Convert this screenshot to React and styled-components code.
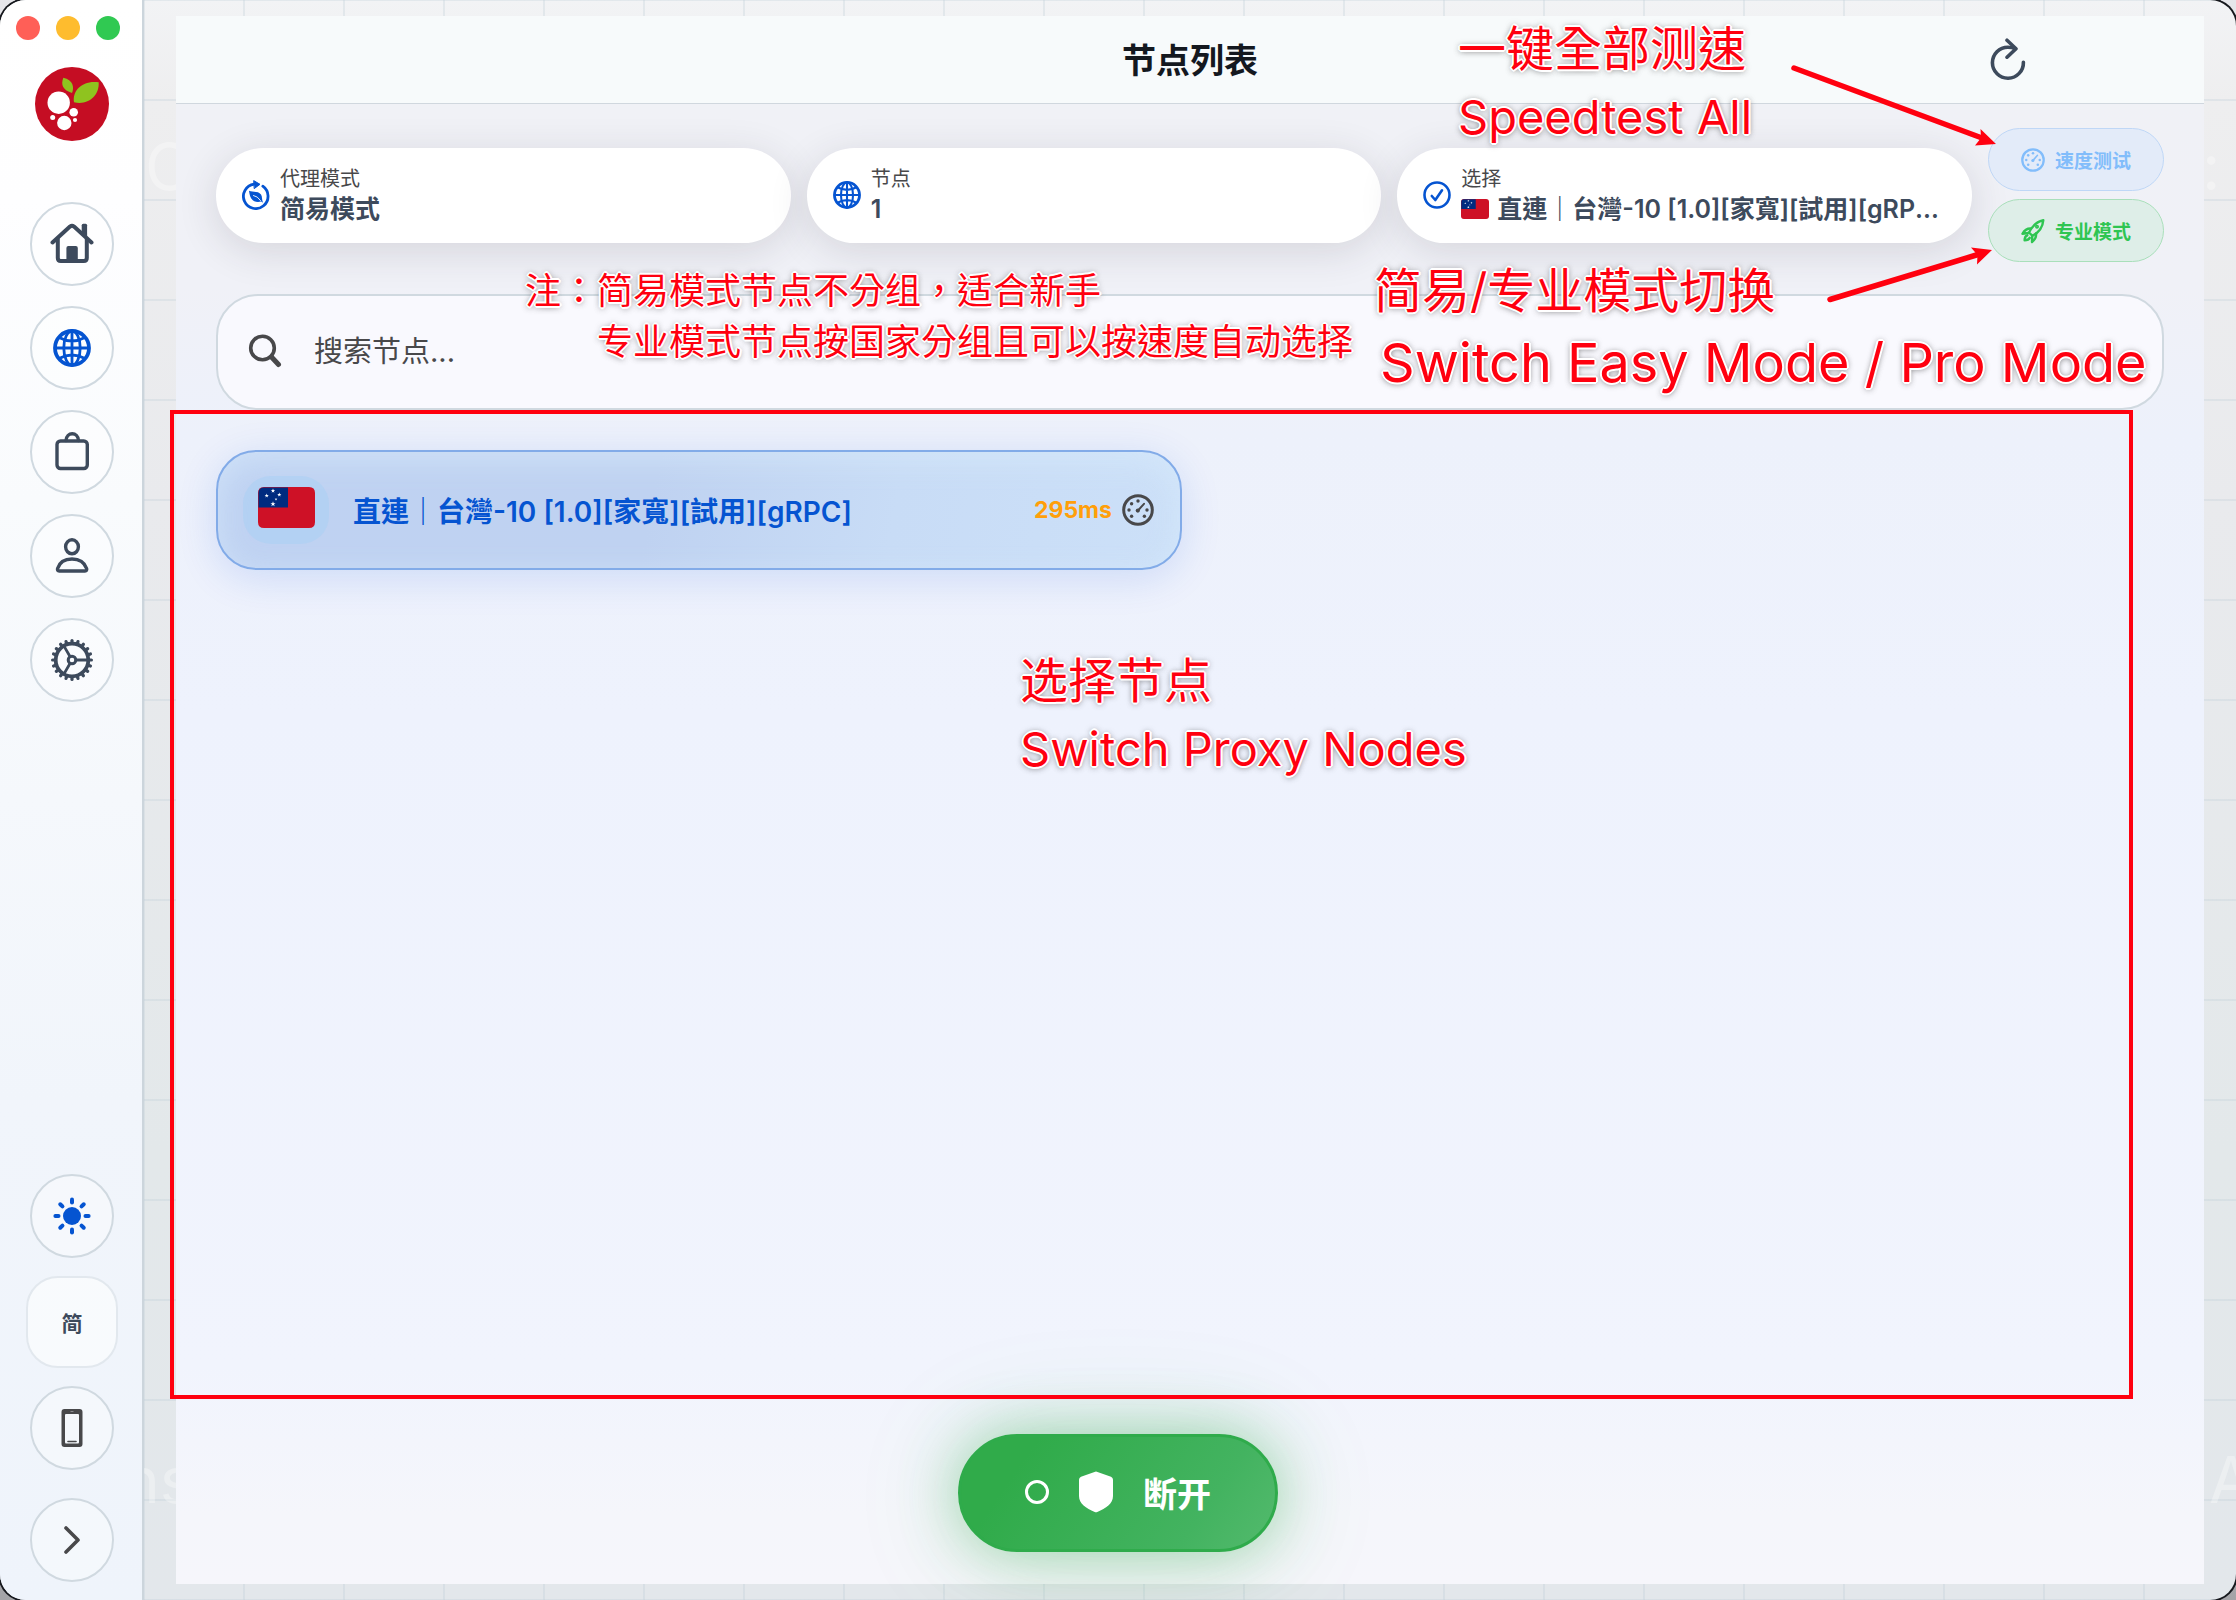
import React, { useState } from 'react';
import styled, { createGlobalStyle, css } from 'styled-components';

const sans = `Inter, "Noto Sans CJK SC", sans-serif`;
const sansTC = `Inter, "Noto Sans CJK TC", sans-serif`;
const ink = '#3d4a5c';
const grey = '#48484a';
const blue = '#0554d1';
const line = '#d0d9e0';

const GlobalStyle = createGlobalStyle`
  * { box-sizing: border-box; }
  html { background: linear-gradient(#e6e6ea, #a4a4a8); min-height: 100%; }
  body { margin: 0; font-family: ${sans}; color: ${ink}; }
  button, input { font: inherit; color: inherit; }
  button { cursor: pointer; padding: 0; background: none; border: 0; }
  svg { display: block; flex: none; }
`;

const Window = styled.div`
  position: relative;
  display: flex;
  min-height: 100vh;
  border-radius: 26px;
  overflow: hidden;
  background-color: #eaecee;
  background-image:
    linear-gradient(rgba(190, 205, 215, 0.3) 2px, transparent 2px),
    linear-gradient(90deg, rgba(190, 205, 215, 0.3) 2px, transparent 2px),
    linear-gradient(#f2f3f5, #eeeeef 100px, #e9eaed 500px, #e3e8ea 1150px, #e3e7eb);
  background-size: 100px 100px, 100px 100px, 100% 100%;
  background-position: 0 -1px, 43px 0, 0 0;
  box-shadow: 0 0 0 2px #16181d;
`;

const Watermark = styled.span`
  position: absolute;
  left: ${(p) => p.$x};
  top: ${(p) => p.$y};
  font-size: 64px;
  line-height: 80px;
  color: rgba(255, 255, 255, 0.32);
`;

/* ---------- sidebar ---------- */

const Sidebar = styled.aside`
  position: relative;
  display: flex;
  flex-direction: column;
  align-items: center;
  width: 144px;
  flex: none;
  padding: 16px 0 18px 2px;
  border-right: 2px solid #ccd5dc;
  background: linear-gradient(#ffffff, #fefeff 200px, #f9fbfd 500px, #f1f5fb 1100px, #eff4fb);
`;

const Lights = styled.div`
  display: flex;
  gap: 16px;
  align-self: flex-start;
  padding-left: 14px;
`;

const Light = styled.button`
  width: 24px;
  height: 24px;
  border-radius: 50%;
  background: ${(p) => p.$color};
`;

const Brand = styled.div`
  margin-top: 27px;
`;

const Nav = styled.nav`
  display: flex;
  flex-direction: column;
  gap: 20px;
  margin-top: 61px;
`;

const Tools = styled.div`
  display: flex;
  flex-direction: column;
  align-items: center;
  gap: 18px;
  margin-top: auto;
`;

const round = css`
  display: flex;
  align-items: center;
  justify-content: center;
  border: 2px solid ${line};
  background: rgba(255, 255, 255, 0.35);
`;

const RoundButton = styled.button`
  ${round}
  width: 84px;
  height: 84px;
  border-radius: 42px;
  color: ${(p) => (p.$active ? blue : ink)};
`;

const LangButton = styled.button`
  ${round}
  width: 92px;
  height: 92px;
  border-radius: 32px;
  border-color: #e2e8ee;
  background: rgba(255, 255, 255, 0.55);
  font-size: 21px;
  font-weight: 700;
`;

const ExpandButton = styled(RoundButton)`
  margin-top: 10px;
  color: ${grey};
`;

/* ---------- main panel ---------- */

const Main = styled.main`
  position: relative;
  display: flex;
  flex: 1;
  min-width: 0;
  padding: 16px 32px;
  overflow: hidden;
`;

const Panel = styled.section`
  position: relative;
  display: flex;
  flex-direction: column;
  flex: 1;
  min-width: 0;
  background: linear-gradient(#f0f1f6 90px, #f0f1f7 270px, #edf1fb 420px, #eef2fd 700px, #f1f4fd 1350px, #f5f6fb 1500px, #f6f6fb);
`;

const Header = styled.header`
  display: grid;
  grid-template-columns: 1fr auto 1fr;
  align-items: center;
  height: 88px;
  border-bottom: 1px solid #d0d7de;
  background: #f7fafb;
`;

const Title = styled.h1`
  grid-column: 2;
  margin: 0;
  padding-top: 2px;
  font-size: 34px;
  line-height: 48px;
  font-weight: 700;
  color: #14181f;
`;

const RefreshButton = styled.button`
  justify-self: end;
  margin-right: 176px;
`;

const Body = styled.div`
  padding: 24px 40px;
`;

const Summary = styled.div`
  display: flex;
  align-items: center;
  gap: 16px;
`;

const Card = styled.div`
  display: flex;
  align-items: center;
  gap: 10px;
  flex: 1 1 0;
  min-width: 0;
  height: 95px;
  padding: 0 32px 0 26px;
  border-radius: 48px;
  background: #ffffff;
  color: ${blue};
  box-shadow: 0 8px 40px rgba(50, 40, 60, 0.14);
`;

const CardText = styled.div`
  min-width: 0;
`;

const Label = styled.div`
  font-size: 20px;
  line-height: 28px;
  color: ${grey};
`;

const Value = styled.div`
  display: flex;
  align-items: center;
  gap: 8px;
  font-family: ${(p) => (p.lang === 'zh-Hant' ? sansTC : sans)};
  font-size: 25px;
  line-height: 33px;
  font-weight: 600;
  color: ${ink};
`;

const Ellipsis = styled.span`
  overflow: hidden;
  white-space: nowrap;
  text-overflow: ellipsis;
`;

const Actions = styled.div`
  display: flex;
  flex-direction: column;
  gap: 8px;
  width: 176px;
  flex: none;
`;

const tones = {
  blue: { text: '#82bdfb', fill: '#e3ebf9', edge: '#bfd7f6' },
  green: { text: '#2fc552', fill: '#deeee8', edge: '#a9dfba' },
};

const Action = styled.button`
  display: flex;
  align-items: center;
  justify-content: center;
  gap: 10px;
  height: 63px;
  border: 1px solid ${(p) => tones[p.$tone].edge};
  border-radius: 32px;
  background: ${(p) => tones[p.$tone].fill};
  color: ${(p) => tones[p.$tone].text};
  font-size: 19px;
  font-weight: 700;
`;

const Search = styled.label`
  display: flex;
  align-items: center;
  gap: 32px;
  height: 116px;
  margin-top: 32px;
  padding: 0 30px 2px;
  border: 2px solid ${line};
  border-radius: 42px;
  background: #f9f9fe;
  color: ${grey};
`;

const SearchInput = styled.input`
  flex: 1;
  min-width: 0;
  height: 48px;
  padding: 0;
  border: 0;
  outline: 0;
  background: none;
  font-size: 29px;
  &::placeholder { color: ${grey}; opacity: 1; }
`;

const Nodes = styled.ul`
  display: grid;
  grid-template-columns: 1fr 1fr;
  gap: 16px;
  margin: 40px 0 0;
  padding: 0;
  list-style: none;
`;

const Node = styled.li`
  display: flex;
  align-items: center;
  gap: 10px;
  height: 120px;
  padding: 0 26px 0 25px;
  border: 2px solid #82abe8;
  border-radius: 40px;
  background: linear-gradient(100deg, #bfd2f2, #bfd2f1 45%, #c8dcf6 70%, #cce0f8);
  box-shadow: inset 0 8px 32px rgba(218, 236, 252, 0.6), 0 8px 40px rgba(0, 80, 220, 0.14);
`;

const NodePick = styled.button`
  display: flex;
  align-items: center;
  gap: 24px;
  flex: 1;
  min-width: 0;
  font-family: ${sansTC};
  font-size: 28px;
  font-weight: 600;
  color: ${blue};
`;

const FlagTile = styled.span`
  display: flex;
  align-items: center;
  justify-content: center;
  width: 86px;
  height: 68px;
  padding-bottom: 5px;
  border-radius: 28px;
  background: rgba(170, 208, 244, 0.55);
`;

const Ping = styled.span`
  font-size: 23px;
  font-weight: 700;
  color: #ff9f0a;
`;

const PingButton = styled.button`
  color: ${grey};
`;

const Disconnect = styled.button`
  position: absolute;
  left: 50%;
  bottom: 48px;
  display: flex;
  align-items: center;
  justify-content: center;
  gap: 30px;
  width: 320px;
  height: 118px;
  margin-left: -160px;
  padding-bottom: 2px;
  border: 3px solid #2fab4b;
  border-radius: 59px;
  background: linear-gradient(125deg, #30ab4a 20%, #43b360 75%, #53ba6d);
  box-shadow: 0 0 60px rgba(48, 171, 74, 0.42), 0 4px 120px rgba(48, 171, 74, 0.14);
  color: #ffffff;
  font-size: 34px;
  font-weight: 700;
`;

const Ring = styled.span`
  width: 24px;
  height: 24px;
  border: 3px solid #ffffff;
  border-radius: 50%;
`;

/* ---------- callouts drawn over the window ---------- */

const Callouts = styled.div`
  position: absolute;
  inset: 0;
  pointer-events: none;
`;

const Frame = styled.div`
  position: absolute;
  left: 170px;
  right: 103px;
  top: 410px;
  bottom: 201px;
  border: 4px solid #ff000f;
`;

const Arrows = styled.svg`
  position: absolute;
  right: 216px;
  top: 40px;
`;

const Note = styled.div`
  position: absolute;
  left: ${(p) => p.$x};
  top: ${(p) => p.$y};
  font-family: ${sansTC};
  font-size: ${(p) => p.$size || 48}px;
  line-height: ${(p) => p.$leading || 68}px;
  white-space: pre;
  color: #ff000f;
  text-shadow:
    2px 0 0 #fff, -2px 0 0 #fff, 0 2px 0 #fff, 0 -2px 0 #fff,
    1px 1px 0 #fff, -1px 1px 0 #fff, 1px -1px 0 #fff, -1px -1px 0 #fff,
    0 0 6px rgba(60, 60, 60, 0.6), 0 2px 6px rgba(60, 60, 60, 0.35);
`;

const NoteLine = styled.div`
  font-size: ${(p) => (p.$size ? `${p.$size}px` : 'inherit')};
  padding-left: ${(p) => p.$indent || 0}px;
`;

/* ---------- icons ---------- */

const Svg = ({ w, h, sw = 3, children }) => (
  <svg width={w} height={h} viewBox={`0 0 ${w} ${h}`} fill="none" stroke="currentColor" strokeWidth={sw} strokeLinecap="round" strokeLinejoin="round" aria-hidden="true">
    {children}
  </svg>
);

const HomeIcon = () => (
  <Svg w={44} h={44} sw={4}>
    <path d="M2.5 20.5 20 4.6Q22 3 24 4.6L41.5 20.5" />
    <path d="M7.8 17V36Q7.8 39 10.8 39H33.8Q36.8 39 36.8 36V17" />
    <path d="M16.4 40V26Q16.4 24 18.4 24H25.8Q27.8 24 27.8 26V40Z" fill="currentColor" stroke="none" />
    <path d="M31.7 11V3.2Q31.7 1.7 33.2 1.7H35.6Q37.1 1.7 37.1 3.2V17Z" fill="currentColor" stroke="none" />
  </Svg>
);

const GlobeIcon = ({ size = 38 }) => (
  <svg width={size} height={size} viewBox="0 0 38 38" fill="none" stroke="currentColor" strokeWidth="2.8" aria-hidden="true">
    <circle cx="19" cy="19" r="17" strokeWidth="3.8" />
    <ellipse cx="19" cy="19" rx="8.2" ry="17" />
    <path d="M19 2V36M2 19H36M6 8.5Q19 15.5 32 8.5M6 29.5Q19 22.5 32 29.5" />
  </svg>
);

const BagIcon = () => (
  <Svg w={44} h={44} sw={3.4}>
    <rect x="7" y="11" width="30.3" height="27.5" rx="3.5" />
    <path d="M16 10.5C16.500 1.500 28 1.500 28.500 10.500" />
  </Svg>
);

const PersonIcon = () => (
  <Svg w={44} h={44} sw={3.4}>
    <ellipse cx="22" cy="12.8" rx="6.4" ry="7" />
    <path d="M7.6 34.5C9.5 28.5 14.5 25 22 25S34.5 28.5 36.6 34.5Q37.2 37 35 37H9.2Q7 37 7.6 34.5Z" />
  </Svg>
);

const GearIcon = () => (
  <Svg w={44} h={44}>
    <circle cx="22" cy="22" r="16.3" strokeWidth="3.8" />
    <circle cx="22" cy="22" r="3.8" strokeWidth="3" />
    {Array.from({ length: 20 }, (_, i) => (
      <path key={i} d="M39 22H41.4" strokeWidth="3.2" transform={`rotate(${i * 18} 22 22)`} />
    ))}
    {[0, 120, 240].map((a) => (
      <path key={a} d="M26 22H38" strokeWidth="2.8" transform={`rotate(${a} 22 22)`} />
    ))}
  </Svg>
);

const SunIcon = () => (
  <Svg w={40} h={40} sw={4}>
    <circle cx="20" cy="20" r="9" fill="currentColor" stroke="none" />
    {[0, 45, 90, 135, 180, 225, 270, 315].map((a) => (
      <path key={a} d="M33.5 20H36.6" transform={`rotate(${a} 20 20)`} />
    ))}
  </Svg>
);

const PhoneIcon = () => (
  <svg width="22" height="38" viewBox="0 0 22 38" aria-hidden="true">
    <path fillRule="evenodd" fill={grey} d="M3.5 0H18.5Q21.5 0 21.5 3V35Q21.5 38 18.5 38H3.5Q.5 38 .5 35V3Q.5 0 3.5 0ZM5 5Q4 5 4 6V33Q4 34.5 5 34.5H17Q18 34.5 18 33V6Q18 5 17 5Z" />
    <path d="M7 32.5H15" stroke={grey} strokeWidth="1.6" strokeLinecap="round" />
    <path d="M9.5 2.5H12.5" stroke="#8c8c90" strokeWidth="1" />
  </svg>
);

const ChevronIcon = () => (
  <Svg w={16} h={28} sw={3.6}>
    <path d="M2 2 14 14 2 26" />
  </Svg>
);

const RefreshIcon = () => (
  <Svg w={40} h={44} sw={3.6}>
    <path d="M35.4 24.2A15.5 15.5 0 1 1 20 9.2Q24.5 9.2 27 10.7" />
    <path d="M19 2.2 28 10.7 19 19.2" />
  </Svg>
);

const EasyModeIcon = () => (
  <Svg w={28} h={30} sw={2.8}>
    <path d="M20.8 6.2A12.3 12.3 0 1 1 12 4.1" />
    <path d="M12 .8 18 4.3 12.5 8.4Z" fill="currentColor" strokeWidth="1" />
    <path d="M7 10.8C11 12.5 16.5 10.8 19 14.5C20.5 17 19.6 19 21 22.8L19.3 21.5C16 22.3 13 22 10.8 20.3C8 18 7.6 14.5 7 10.8Z" fill="currentColor" stroke="none" />
    <path d="M11.5 15.5Q15.5 16 18.5 20.5" stroke="#fff" strokeWidth=".9" />
  </Svg>
);

const CheckIcon = () => (
  <Svg w={28} h={28} sw={2.6}>
    <circle cx="14" cy="14" r="12.5" />
    <path d="M8.8 15 12.3 19 19 9.3" />
  </Svg>
);

const GaugeIcon = ({ size = 32 }) => (
  <svg width={size} height={size} viewBox="0 0 32 32" fill="currentColor" aria-hidden="true">
    <circle cx="16" cy="16" r="14.3" fill="none" stroke="currentColor" strokeWidth="3" />
    {[[16, 7], [9.6, 9.8], [7, 16], [9.6, 22.3], [22.4, 22.3], [25, 16]].map(([x, y]) => (
      <circle key={`${x}-${y}`} cx={x} cy={y} r="1.7" />
    ))}
    <circle cx="15.8" cy="16.6" r="2.1" />
    <path d="M16 16.5 22 9.8" stroke="currentColor" strokeWidth="2" strokeLinecap="round" />
  </svg>
);

const RocketIcon = () => (
  <Svg w={24} h={26} sw={2.4}>
    <path d="M22.3 2.2C16 3.5 11.5 7.5 8 14.5L11.5 17.8C18 14.5 21.8 9 22.3 2.2Z" />
    <path d="M10 10.5C6 10.3 3.5 12 1.5 15.8L7.5 15" />
    <path d="M15 15.5C15.5 19 14 21.8 11 24L11.2 18.5" />
    <path d="M6.3 17.3C4.2 18 3.6 20 3.6 22.3C6 22.3 8 21.6 8.8 19.8" />
    <circle cx="16" cy="8.8" r=".8" />
  </Svg>
);

const SearchIcon = () => (
  <Svg w={34} h={34} sw={3.6}>
    <circle cx="14.5" cy="14" r="11.8" />
    <path d="M23.5 23 30.5 30.5" strokeWidth="5" />
  </Svg>
);

const ShieldIcon = () => (
  <svg width="34" height="42" viewBox="0 0 34 42" fill="currentColor" aria-hidden="true">
    <path d="M15.5 1Q17 .2 18.5 1L32 5.8Q34 6.6 34 8.8V25C34 33 27 37 18.3 41Q17 41.6 15.7 41C7 37 0 33 0 25V8.8Q0 6.6 2 5.8Z" />
  </svg>
);

const LogoIcon = () => (
  <svg width="74" height="74" viewBox="-37 -37 74 74" role="img" aria-label="logo">
    <circle r="37" fill="#c50d23" />
    <g fill="#fff">
      <circle cx="-13.3" cy="-1.3" r="11.2" />
      <circle cx="-7.7" cy="19" r="7.2" />
      <circle cx="1.7" cy="8.3" r="4.3" />
      <circle cx="-19.3" cy="13.5" r="2.5" />
      <circle cx="3" cy="16" r="2.1" />
    </g>
    <g fill="#8fc31f">
      <path d="M-8.7-26.3C1-24 2.5-17 0-11C-9-14-11.5-19-8.7-26.3Z" />
      <path d="M26.7-21.7C10-24 0-13 2-1.7C16 1.5 27.5-8 26.7-21.7Z" />
    </g>
  </svg>
);

const star = 'M0-1 .24-.32.95-.31.38.12.59.81 0 .4-.59.81-.38.12-.95-.31-.24-.32Z';

const Flag = ({ w, h }) => (
  <svg width={w} height={h} viewBox="0 0 57 41" preserveAspectRatio="none" aria-hidden="true">
    <path d="M6 0H51Q57 0 57 6V35Q57 41 51 41H6Q0 41 0 35V6Q0 0 6 0Z" fill="#ce1126" />
    <path d="M6 .5H30V20.5H.5V6Q.5.5 6 .5Z" fill="#002b7f" />
    {[[15, 3.8, 2.3], [8.7, 8.7, 2.2], [21.3, 7.7, 2.2], [18, 12.3, 1.4], [15, 17, 2.7]].map(([x, y, r]) => (
      <path key={`${x}${y}`} d={star} fill="#fff" transform={`translate(${x} ${y}) scale(${r})`} />
    ))}
  </svg>
);

const nodeName = '直連｜台灣-10 [1.0][家寬][試用][gRPC]';

export default function App() {
  const [query, setQuery] = useState('');

  return (
    <>
      <GlobalStyle />
      <Window>
        <Sidebar>
          <Lights>
            <Light $color="#ff5f57" aria-label="关闭" />
            <Light $color="#febc2e" aria-label="最小化" />
            <Light $color="#30c952" aria-label="缩放" />
          </Lights>
          <Brand><LogoIcon /></Brand>
          <Nav>
            <RoundButton aria-label="首页"><HomeIcon /></RoundButton>
            <RoundButton aria-label="节点" $active><GlobeIcon /></RoundButton>
            <RoundButton aria-label="商店"><BagIcon /></RoundButton>
            <RoundButton aria-label="用户"><PersonIcon /></RoundButton>
            <RoundButton aria-label="设置"><GearIcon /></RoundButton>
          </Nav>
          <Tools>
            <RoundButton aria-label="主题" $active><SunIcon /></RoundButton>
            <LangButton>简</LangButton>
            <RoundButton aria-label="手机"><PhoneIcon /></RoundButton>
            <ExpandButton aria-label="展开"><ChevronIcon /></ExpandButton>
          </Tools>
        </Sidebar>

        <Main>
          <Watermark aria-hidden="true" $x="1px" $y="127px">C</Watermark>
          <Watermark aria-hidden="true" $x="-22px" $y="1440px">ns</Watermark>
          <Watermark aria-hidden="true" $x="calc(100% - 34px)" $y="127px">:</Watermark>
          <Watermark aria-hidden="true" $x="calc(100% - 27px)" $y="1440px">A</Watermark>
          <Panel>
            <Header>
              <Title>节点列表</Title>
              <RefreshButton aria-label="刷新"><RefreshIcon /></RefreshButton>
            </Header>
            <Body>
              <Summary>
                <Card>
                  <EasyModeIcon />
                  <CardText>
                    <Label>代理模式</Label>
                    <Value>简易模式</Value>
                  </CardText>
                </Card>
                <Card>
                  <GlobeIcon size={28} />
                  <CardText>
                    <Label>节点</Label>
                    <Value>1</Value>
                  </CardText>
                </Card>
                <Card>
                  <CheckIcon />
                  <CardText>
                    <Label>选择</Label>
                    <Value lang="zh-Hant">
                      <Flag w={28} h={20} />
                      <Ellipsis>{nodeName}</Ellipsis>
                    </Value>
                  </CardText>
                </Card>
                <Actions>
                  <Action $tone="blue"><GaugeIcon size={24} />速度测试</Action>
                  <Action $tone="green"><RocketIcon />专业模式</Action>
                </Actions>
              </Summary>

              <Search>
                <SearchIcon />
                <SearchInput aria-label="搜索节点" placeholder="搜索节点..." value={query} onChange={(e) => setQuery(e.target.value)} />
              </Search>

              <Nodes>
                <Node>
                  <NodePick lang="zh-Hant">
                    <FlagTile><Flag w={57} h={41} /></FlagTile>
                    {nodeName}
                  </NodePick>
                  <Ping>295ms</Ping>
                  <PingButton aria-label="测速"><GaugeIcon /></PingButton>
                </Node>
              </Nodes>
            </Body>
          </Panel>
        </Main>

        <Disconnect>
          <Ring />
          <ShieldIcon />
          断开
        </Disconnect>

        <Callouts>
          <Frame />
          <Arrows width="260" height="270" viewBox="1760 40 260 270" fill="#ff000f" stroke="#ff000f">
            <path d="M1794 68 1982 138" strokeWidth="5.5" strokeLinecap="round" />
            <path d="M1996 144 1980.5 129 1981 138 1975 145.5Z" stroke="none" />
            <path d="M1830 299.5 1978 254.5" strokeWidth="5.5" strokeLinecap="round" />
            <path d="M1992 250 1971 247.5 1977.5 255 1977 264.5Z" stroke="none" />
          </Arrows>
          <Note $x="calc(100% - 778px)" $y="15px">
            <NoteLine>一键全部测速</NoteLine>
            <NoteLine $size={47}>Speedtest All</NoteLine>
          </Note>
          <Note $x="calc(100% - 862px)" $y="255px" $leading={72}>
            <NoteLine>简易/专业模式切换</NoteLine>
            <NoteLine $size={54} $indent={6}>Switch Easy Mode / Pro Mode</NoteLine>
          </Note>
          <Note $x="525px" $y="266px" $size={36} $leading={51}>
            <NoteLine>注：简易模式节点不分组，适合新手</NoteLine>
            <NoteLine $indent={72}>专业模式节点按国家分组且可以按速度自动选择</NoteLine>
          </Note>
          <Note $x="1020px" $y="647px">
            <NoteLine>选择节点</NoteLine>
            <NoteLine $size={47}>Switch Proxy Nodes</NoteLine>
          </Note>
        </Callouts>
      </Window>
    </>
  );
}
